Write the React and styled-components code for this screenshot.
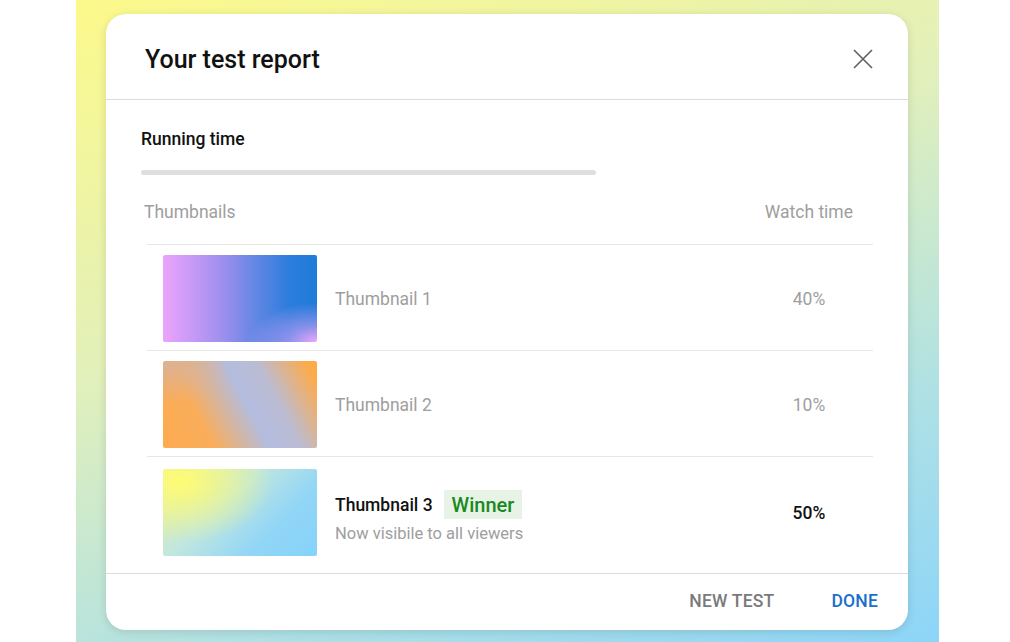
import styled, { createGlobalStyle } from "styled-components";

const GlobalStyle = createGlobalStyle`
  body {
    margin: 0;
    background: #fff;
    font-family: Roboto, "Noto Sans", Arial, sans-serif;
  }
`;

const Page = styled.div`
  width: 1010px;
  height: 642px;
  padding-left: 76px;
  box-sizing: border-box;
  overflow: hidden;
`;

const Backdrop = styled.div`
  width: 863px;
  height: 642px;
  box-sizing: border-box;
  padding: 14px 31px 0 30px;
  background: linear-gradient(160deg, #fcf98a 0%, #e2f0bb 40%, #ade0e6 75%, #8dd5f8 100%);
`;

const Card = styled.div`
  width: 802px;
  height: 616px;
  background: #fff;
  border-radius: 20px;
  box-shadow: 0 2px 10px rgba(0, 0, 0, 0.12);
  display: flex;
  flex-direction: column;
  overflow: hidden;
`;

const Header = styled.div`
  height: 86px;
  display: flex;
  align-items: center;
  justify-content: space-between;
  padding: 5px 35px 0 39px;
  box-sizing: border-box;
  border-bottom: 1px solid #dcdcdc;
`;

const Title = styled.h1`
  margin: 0;
  font-size: 25px;
  font-weight: 500;
  color: #111;
`;

const CloseButton = styled.button`
  border: none;
  background: transparent;
  padding: 0;
  width: 20px;
  height: 20px;
  cursor: pointer;
`;

const Body = styled.div`
  flex: 1;
  padding: 28px 35px 0 35px;
`;

const Label = styled.div`
  font-size: 17.5px;
  font-weight: 500;
  line-height: 22px;
  color: #111;
`;

const Track = styled.div`
  width: 455px;
  height: 5px;
  margin-top: 20px;
  border-radius: 3px;
  background: #dedede;
`;

const TableHead = styled.div`
  display: flex;
  justify-content: space-between;
  margin-top: 26px;
  padding: 0 20px 21px 3px;
  font-size: 17.5px;
  line-height: 22px;
  color: #9e9e9e;
`;

const Rows = styled.div`
  margin-left: 6px;
`;

const Row = styled.div`
  display: grid;
  grid-template-columns: 154px 1fr 100px;
  align-items: center;
  column-gap: 18px;
  padding: ${(p) => (p.$last ? "12px" : "10px")} 14px 8px 16px;
  border-top: 1px solid #e6e6e6;
`;

const Thumb = styled.div`
  width: 154px;
  height: 87px;
  border-radius: 2px;
  background: ${(p) => p.$bg};
`;

const Info = styled.div`
  padding-top: ${(p) => (p.$shift ? "8px" : "0")};
`;

const Name = styled.div`
  display: flex;
  align-items: center;
  gap: 11px;
  font-size: 17.5px;
  color: ${(p) => (p.$strong ? "#111" : "#9e9e9e")};
  font-weight: ${(p) => (p.$strong ? 500 : 400)};
`;

const Badge = styled.span`
  display: inline-flex;
  align-items: center;
  height: 29px;
  padding: 0 8px;
  background: #e6f3e6;
  color: #198a1c;
  font-size: 20px;
  font-weight: 500;
`;

const Sub = styled.div`
  margin-top: 5px;
  font-size: 16.5px;
  color: #9e9e9e;
`;

const Percent = styled.div`
  text-align: center;
  font-size: 17.5px;
  color: ${(p) => (p.$strong ? "#111" : "#9e9e9e")};
  font-weight: ${(p) => (p.$strong ? 500 : 400)};
`;

const Footer = styled.div`
  height: 57px;
  display: flex;
  align-items: center;
  justify-content: flex-end;
  gap: 57px;
  padding: 0 30px 2px 0;
  box-sizing: border-box;
  border-top: 1px solid #dcdcdc;
`;

const TextButton = styled.button`
  border: none;
  background: transparent;
  padding: 0;
  font-family: inherit;
  font-size: 17.5px;
  font-weight: 500;
  letter-spacing: 0.2px;
  color: ${(p) => (p.$primary ? "#1b6fcb" : "#7a7a7a")};
  cursor: pointer;
`;

const thumbs = [
  {
    id: 1,
    name: "Thumbnail 1",
    pct: "40%",
    bg: "radial-gradient(ellipse 45% 45% at 100% 100%, #eda6fb 0%, rgba(237,166,251,0.5) 40%, rgba(237,166,251,0) 100%), linear-gradient(to right, #eba4fc 0%, #c99af7 18%, #9b8eee 40%, #5e86e3 62%, #2c7ddc 82%, #1f7bd9 100%)",
  },
  {
    id: 2,
    name: "Thumbnail 2",
    pct: "10%",
    bg: "radial-gradient(ellipse 45% 50% at 0% 0%, #dab298 0%, rgba(218,178,152,0) 100%), linear-gradient(62deg, #fdab4f 0%, #f9ad5a 26%, #b3bde0 54%, #bcbcd2 70%, #fcab4c 94%, #fdaa48 100%)",
  },
  {
    id: 3,
    name: "Thumbnail 3",
    pct: "50%",
    winner: true,
    bg: "radial-gradient(ellipse 60% 70% at 12% 15%, #fefb74 0%, rgba(254,251,116,0) 100%), linear-gradient(135deg, #e8f1a8 0%, #bfe6e0 40%, #93d6f6 70%, #85d2fb 100%)",
  },
];

function CloseIcon() {
  return (
    <svg width="20" height="20" viewBox="0 0 20 20">
      <path d="M1 1 L19 19 M19 1 L1 19" stroke="#5f5f5f" strokeWidth="1.6" fill="none" />
    </svg>
  );
}

export default function App() {
  return (
    <>
      <GlobalStyle />
      <Page>
        <Backdrop>
          <Card>
            <Header>
              <Title>Your test report</Title>
              <CloseButton aria-label="Close">
                <CloseIcon />
              </CloseButton>
            </Header>
            <Body>
              <Label>Running time</Label>
              <Track />
              <TableHead>
                <span>Thumbnails</span>
                <span>Watch time</span>
              </TableHead>
              <Rows>
                {thumbs.map((t, i) => (
                  <Row key={t.id} $last={i === thumbs.length - 1}>
                    <Thumb $bg={t.bg} />
                    <Info $shift={t.winner}>
                      <Name $strong={t.winner}>
                        {t.name}
                        {t.winner && <Badge>Winner</Badge>}
                      </Name>
                      {t.winner && <Sub>Now visibile to all viewers</Sub>}
                    </Info>
                    <Percent $strong={t.winner}>{t.pct}</Percent>
                  </Row>
                ))}
              </Rows>
            </Body>
            <Footer>
              <TextButton>NEW TEST</TextButton>
              <TextButton $primary>DONE</TextButton>
            </Footer>
          </Card>
        </Backdrop>
      </Page>
    </>
  );
}
